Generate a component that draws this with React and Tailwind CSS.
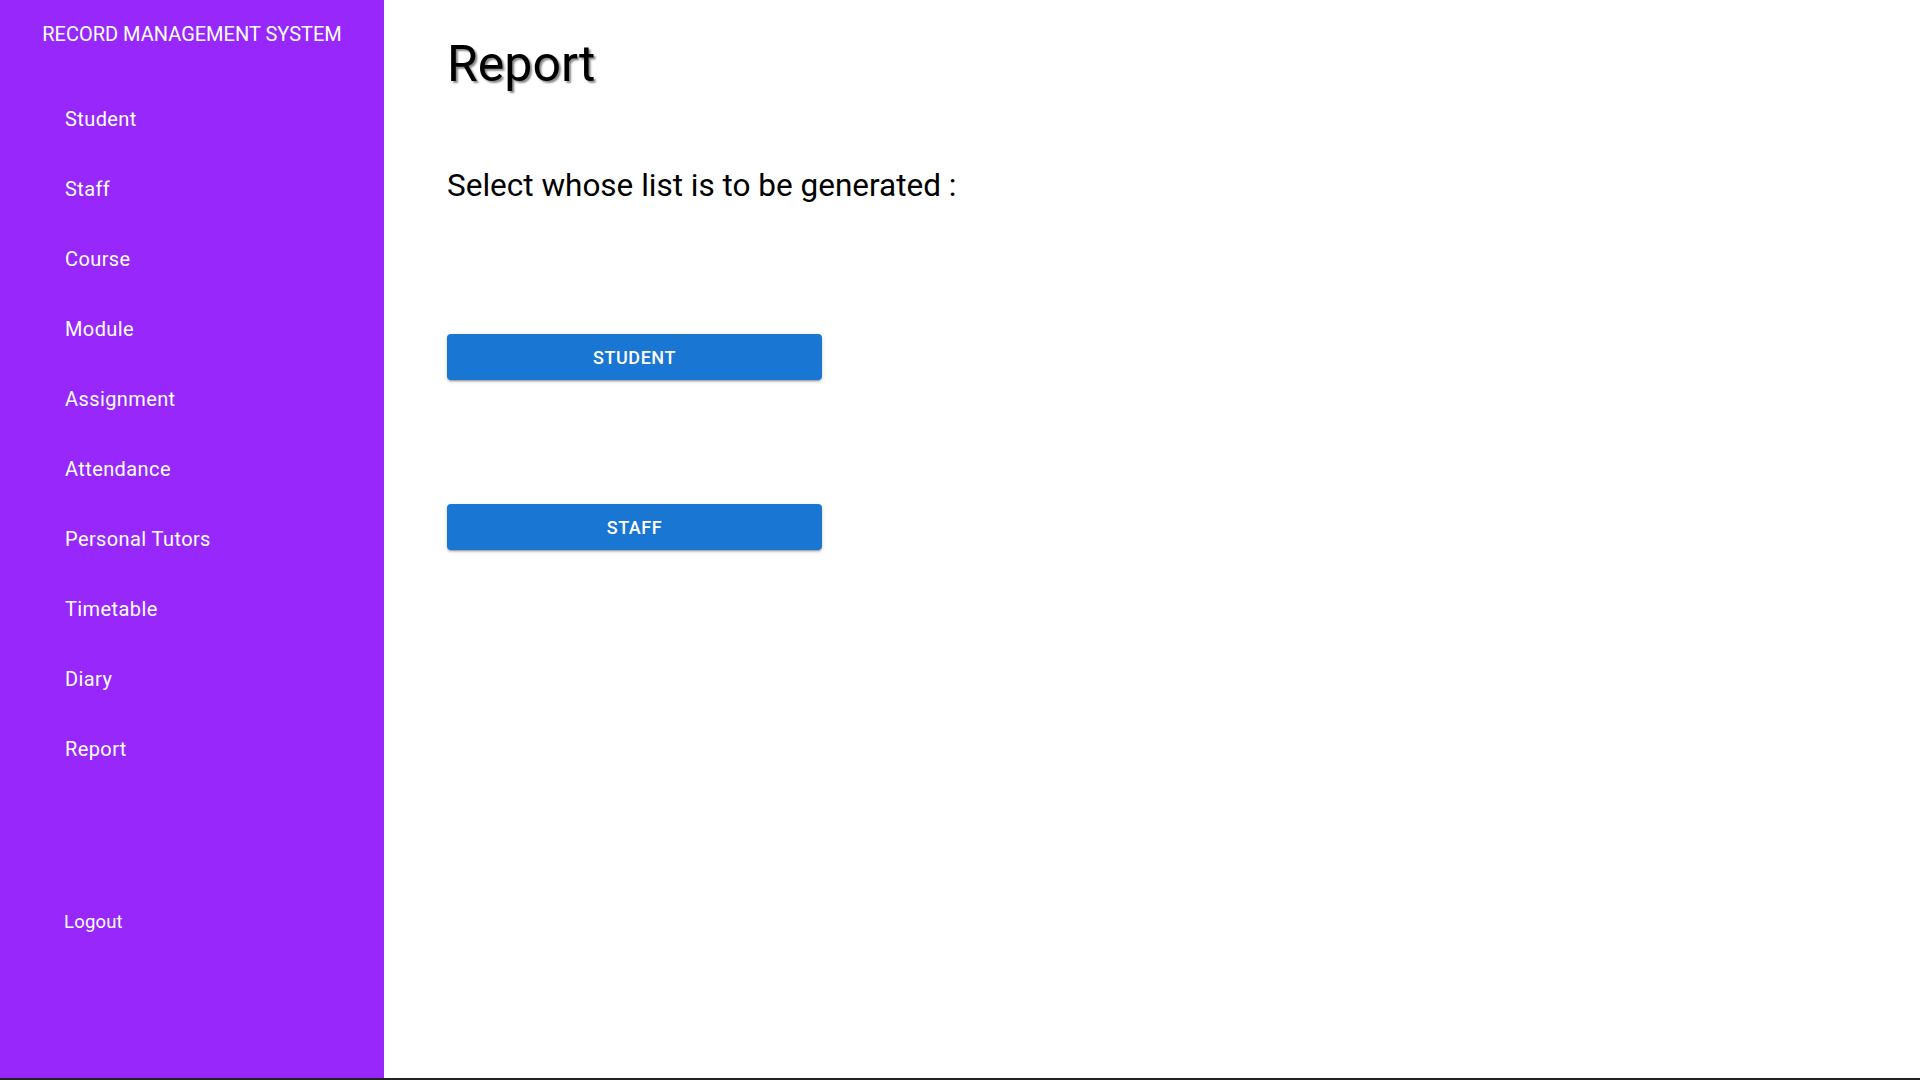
import React from "react";

const links = [
  "Student",
  "Staff",
  "Course",
  "Module",
  "Assignment",
  "Attendance",
  "Personal Tutors",
  "Timetable",
  "Diary",
  "Report",
];

export default function App() {
  return (
    <div
      className="flex h-[1080px] w-full border-b-2 border-[#222222] bg-white"
      style={{ fontFamily: "Roboto, 'Liberation Sans', sans-serif" }}
    >
      <aside className="flex w-[384px] shrink-0 flex-col bg-[#9727fb] text-white">
        <div className="pt-[22px] text-center text-[20px] leading-6">
          RECORD MANAGEMENT SYSTEM
        </div>
        <nav className="mt-[38px] flex flex-col">
          {links.map((l) => (
            <button
              key={l}
              className="h-[70px] pl-[65px] text-left text-[20px] leading-6 tracking-[0.02em] text-white"
            >
              {l}
            </button>
          ))}
        </nav>
        <button className="mt-[126px] pl-[64px] text-left text-[18.5px] leading-6 tracking-[0.01em] text-white">
          Logout
        </button>
      </aside>

      <main className="flex-1 pl-[63px] pt-[28px]">
        <h1 className="text-[50px] leading-[72px] text-black [text-shadow:2px_2px_2px_#888]">
          Report
        </h1>
        <p className="mt-[68px] text-[31.5px] leading-9 text-black">
          Select whose list is to be generated :
        </p>
        <div className="mt-[130px] flex flex-col gap-[124px]">
          <button className="h-[46px] w-[375px] rounded bg-[#1976d2] text-[18px] font-medium tracking-[0.03em] text-white shadow-[0_3px_1px_-2px_rgba(0,0,0,0.2),0_2px_2px_0_rgba(0,0,0,0.14),0_1px_5px_0_rgba(0,0,0,0.12)]">
            STUDENT
          </button>
          <button className="h-[46px] w-[375px] rounded bg-[#1976d2] text-[18px] font-medium tracking-[0.03em] text-white shadow-[0_3px_1px_-2px_rgba(0,0,0,0.2),0_2px_2px_0_rgba(0,0,0,0.14),0_1px_5px_0_rgba(0,0,0,0.12)]">
            STAFF
          </button>
        </div>
      </main>
    </div>
  );
}
